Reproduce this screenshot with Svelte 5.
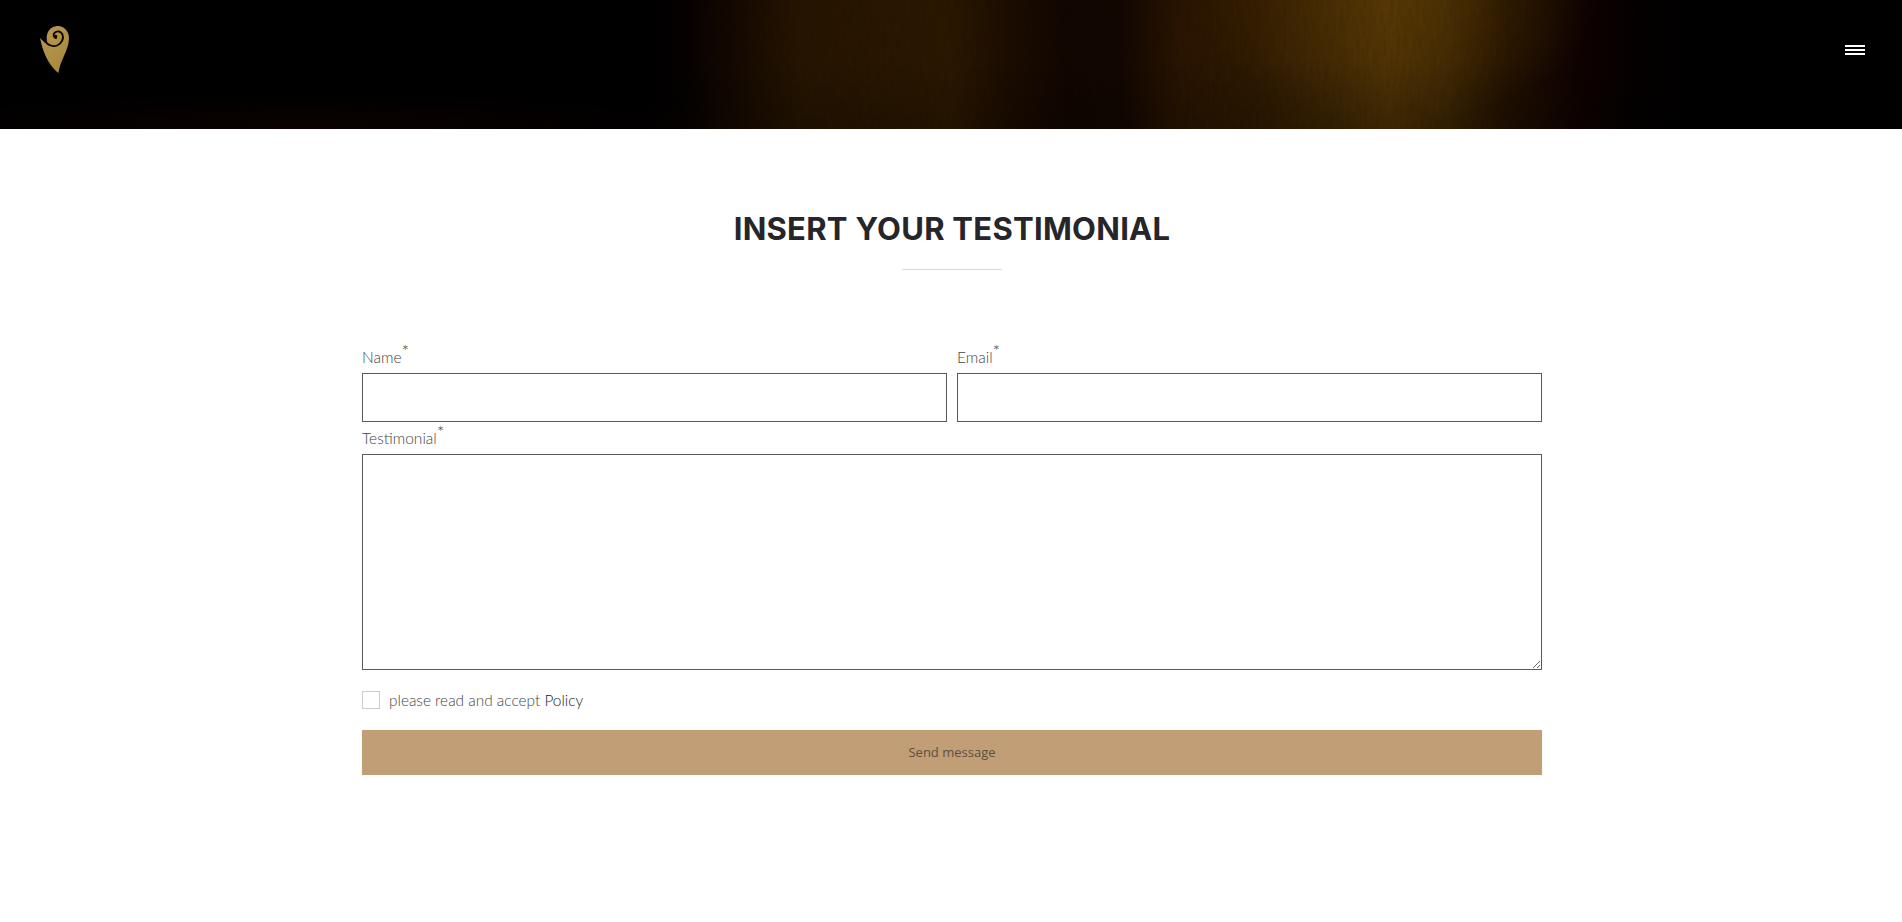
<script>
    let name = '';
    let email = '';
    let testimonial = '';
    let accepted = false;
</script>

<header class="top">
    <svg class="grain" aria-hidden="true">
        <filter id="grain">
            <feTurbulence type="fractalNoise" baseFrequency="0.3 0.06" numOctaves="4" seed="4" />
            <feColorMatrix values="0 0 0 0 0  0 0 0 0 0  0 0 0 0 0  0 0 0 1.3 -0.35" />
        </filter>
        <rect width="100%" height="100%" filter="url(#grain)" />
    </svg>
    <a class="logo" href="#home" aria-label="Home">
        <svg width="30" height="48" viewBox="40 26 30 48">
            <defs>
                <linearGradient id="gold" x1="0" y1="0" x2="0.6" y2="1">
                    <stop offset="0" stop-color="#b8984f" />
                    <stop offset="1" stop-color="#a88a3e" />
                </linearGradient>
            </defs>
            <path fill="url(#gold)" d="M40 38 C43 41 46 44 48 44 C46 40 46.5 35 48 32 C50 28 54 26 58 26 C64 26 69 31 69 38 C69 50 60 60 58.5 73 C52 68 44 58 40 38 Z" />
            <path fill="none" stroke="#060300" stroke-width="1.8" stroke-linecap="round" d="M47 43.5 C50 46 54 46.5 57 45.5 C62 43.5 64 38 62.5 34.5 C60.5 30.5 56 30.5 54 33.5 C53 35.5 54 38 56 38" />
            <circle cx="55.5" cy="36.5" r="1.8" fill="#060300" />
        </svg>
    </a>
    <button class="menu" aria-label="Menu"><span></span><span></span><span></span></button>
</header>

<main>
    <h1>INSERT YOUR TESTIMONIAL</h1>
    <div class="rule"></div>

    <form class="form" on:submit|preventDefault>
        <div class="row">
            <label>
                <span class="label">Name<sup>*</sup></span>
                <input type="text" bind:value={name} />
            </label>
            <label>
                <span class="label">Email<sup>*</sup></span>
                <input type="email" bind:value={email} />
            </label>
        </div>
        <label>
            <span class="label">Testimonial<sup>*</sup></span>
            <textarea bind:value={testimonial}></textarea>
        </label>
        <label class="accept">
            <input type="checkbox" bind:checked={accepted} />
            <span class="accept-text">please read and accept <a href="#policy">Policy</a></span>
        </label>
        <button class="send" type="submit">Send message</button>
    </form>
</main>

<style>
    :global(body) {
        background: #fff;
        font-family: Lato, "Liberation Sans", sans-serif;
    }
    .top {
        position: relative;
        height: 129px;
        display: flex;
        align-items: flex-start;
        justify-content: space-between;
        overflow: hidden;
        background:
            linear-gradient(to bottom, rgba(0,0,0,0) 45%, rgba(0,0,0,0.2) 100%),
            radial-gradient(ellipse 200px 120px at 73.5% 0%, rgba(100,66,6,0.45), rgba(100,66,6,0) 100%),
            radial-gradient(ellipse 460px 40px at 16% 100%, rgba(30,6,0,0.5), rgba(30,6,0,0) 100%),
            linear-gradient(to right,
                #000 0%, #000 33.5%, #060200 36%, #170b00 39%, #271500 42%, #2c1800 50%,
                #1c0d00 53%, #120700 56%, #130800 59%, #2a1500 62%, #2f1a02 66%,
                #3e2604 70%, #4d3105 73%, #3f2704 76%, #241200 79%, #0f0300 83%, #060100 86%, #000 90%, #000 100%);
    }
    .grain {
        position: absolute;
        inset: 0;
        width: 100%;
        height: 100%;
        opacity: 0.12;
    }
    .logo {
        position: relative;
        display: block;
        margin: 26px 0 0 40px;
        line-height: 0;
    }
    .menu {
        position: relative;
        display: flex;
        flex-direction: column;
        gap: 2px;
        width: 20px;
        margin: 45px 37px 0 0;
        padding: 0;
        border: 0;
        background: none;
    }
    .menu span {
        display: block;
        height: 2px;
        background: #fff;
    }
    main {
        width: 1180px;
        margin: 0 0 0 362px;
        padding-bottom: 147px;
    }
    h1 {
        margin: 0;
        padding-top: 81px;
        text-align: center;
        font-family: Inter, "Liberation Sans", sans-serif;
        font-size: 31px;
        line-height: 38px;
        font-weight: 700;
        letter-spacing: 0.27px;
        color: #25252a;
    }
    .rule {
        width: 100px;
        height: 1px;
        margin: 21px auto 0;
        background: #d9d9d9;
    }
    .form {
        display: flex;
        flex-direction: column;
        margin-top: 77px;
    }
    .row {
        display: grid;
        grid-template-columns: 1fr 1fr;
        gap: 10px;
    }
    .label {
        display: block;
        height: 26px;
        font-size: 15.5px;
        line-height: 20px;
        font-weight: 300;
        color: #444;
    }
    sup {
        font-size: 18px;
        font-weight: 300;
        line-height: 0;
        vertical-align: 5px;
    }
    input[type="text"],
    input[type="email"],
    textarea {
        display: block;
        width: 100%;
        box-sizing: border-box;
        margin: 0;
        border: 1px solid #5a5a5a;
        border-radius: 0;
        background: #fff;
        outline: none;
    }
    input[type="text"],
    input[type="email"] {
        height: 49px;
        margin-bottom: 6px;
    }
    textarea {
        height: 216px;
        resize: vertical;
    }
    .accept {
        display: flex;
        align-items: center;
        gap: 9px;
        margin-top: 21px;
        height: 18px;
        font-size: 15.4px;
        font-weight: 300;
        color: #444;
    }
    .accept-text {
        padding-bottom: 1px;
    }
    .accept input {
        appearance: none;
        width: 18px;
        height: 18px;
        margin: 0;
        border: 1px solid #ccc;
        background: #fff;
    }
    .accept a {
        color: #222;
        text-decoration: none;
    }
    .send {
        height: 45px;
        margin-top: 21px;
        padding: 0 0 2px;
        border: 0;
        background: #c19e75;
        font-family: "Open Sans", sans-serif;
        font-size: 13px;
        color: #5c5043;
    }
</style>
